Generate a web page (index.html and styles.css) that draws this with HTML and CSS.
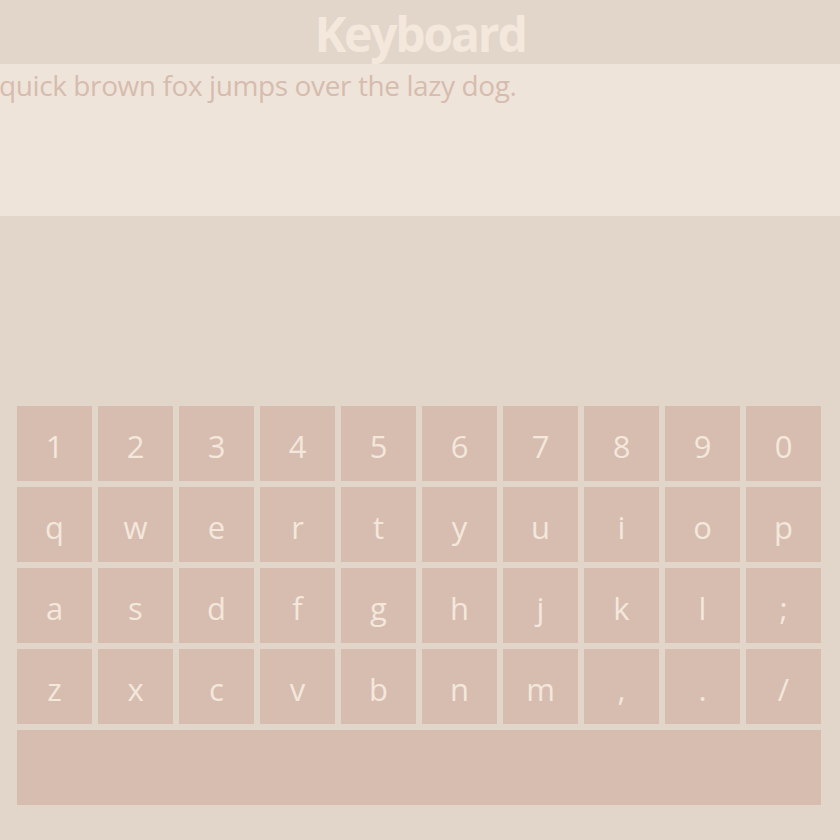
FILE: index.html
```html
<!DOCTYPE html>
<html>
<head>
<meta charset="utf-8">
<link rel="stylesheet" href="styles.css">
</head>
<body>
<header class="title-bar"><h1 class="title">Keyboard</h1></header>
<div class="text-area"><p class="typed">The quick brown fox jumps over the lazy dog.</p></div>
<div class="spacer"></div>
<div class="keyboard">
  <div class="row">
    <div class="key">1</div><div class="key">2</div><div class="key">3</div><div class="key">4</div><div class="key">5</div><div class="key">6</div><div class="key">7</div><div class="key">8</div><div class="key">9</div><div class="key">0</div>
  </div>
  <div class="row">
    <div class="key">q</div><div class="key">w</div><div class="key">e</div><div class="key">r</div><div class="key">t</div><div class="key">y</div><div class="key">u</div><div class="key">i</div><div class="key">o</div><div class="key">p</div>
  </div>
  <div class="row">
    <div class="key">a</div><div class="key">s</div><div class="key">d</div><div class="key">f</div><div class="key">g</div><div class="key">h</div><div class="key">j</div><div class="key">k</div><div class="key">l</div><div class="key">;</div>
  </div>
  <div class="row">
    <div class="key">z</div><div class="key">x</div><div class="key">c</div><div class="key">v</div><div class="key">b</div><div class="key">n</div><div class="key">m</div><div class="key">,</div><div class="key">.</div><div class="key">/</div>
  </div>
  <div class="row">
    <div class="key space"></div>
  </div>
</div>
</body>
</html>
```
FILE: styles.css
```css
html, body {
  margin: 0;
  padding: 0;
  background: #e2d5ca;
  width: 840px;
  height: 840px;
  overflow: hidden;
  font-family: "Open Sans", "Noto Sans", sans-serif;
}
.title-bar {
  height: 64px;
  display: flex;
  justify-content: center;
}
.title {
  margin: 0;
  font-size: 48px;
  font-weight: 700;
  line-height: 68px;
  color: #f4e8dd;
  letter-spacing: -2.2px;
}
.text-area {
  height: 152px;
  background: #efe4da;
  overflow: hidden;
}
.typed {
  margin: 0;
  font-size: 28px;
  line-height: 42px;
  color: #d6bcae;
  letter-spacing: -0.4px;
  text-indent: -55px;
  white-space: nowrap;
}
.spacer {
  height: 190px;
}
.keyboard {
  display: flex;
  flex-direction: column;
  gap: 6px;
  padding-left: 17px;
}
.row {
  display: flex;
  gap: 6px;
}
.key {
  width: 75px;
  height: 75px;
  box-sizing: border-box;
  padding-top: 4px;
  background: #d6bdb0;
  color: #f4e7dc;
  font-size: 31px;
  display: flex;
  align-items: center;
  justify-content: center;
}
.key.space {
  width: 804px;
}
```
